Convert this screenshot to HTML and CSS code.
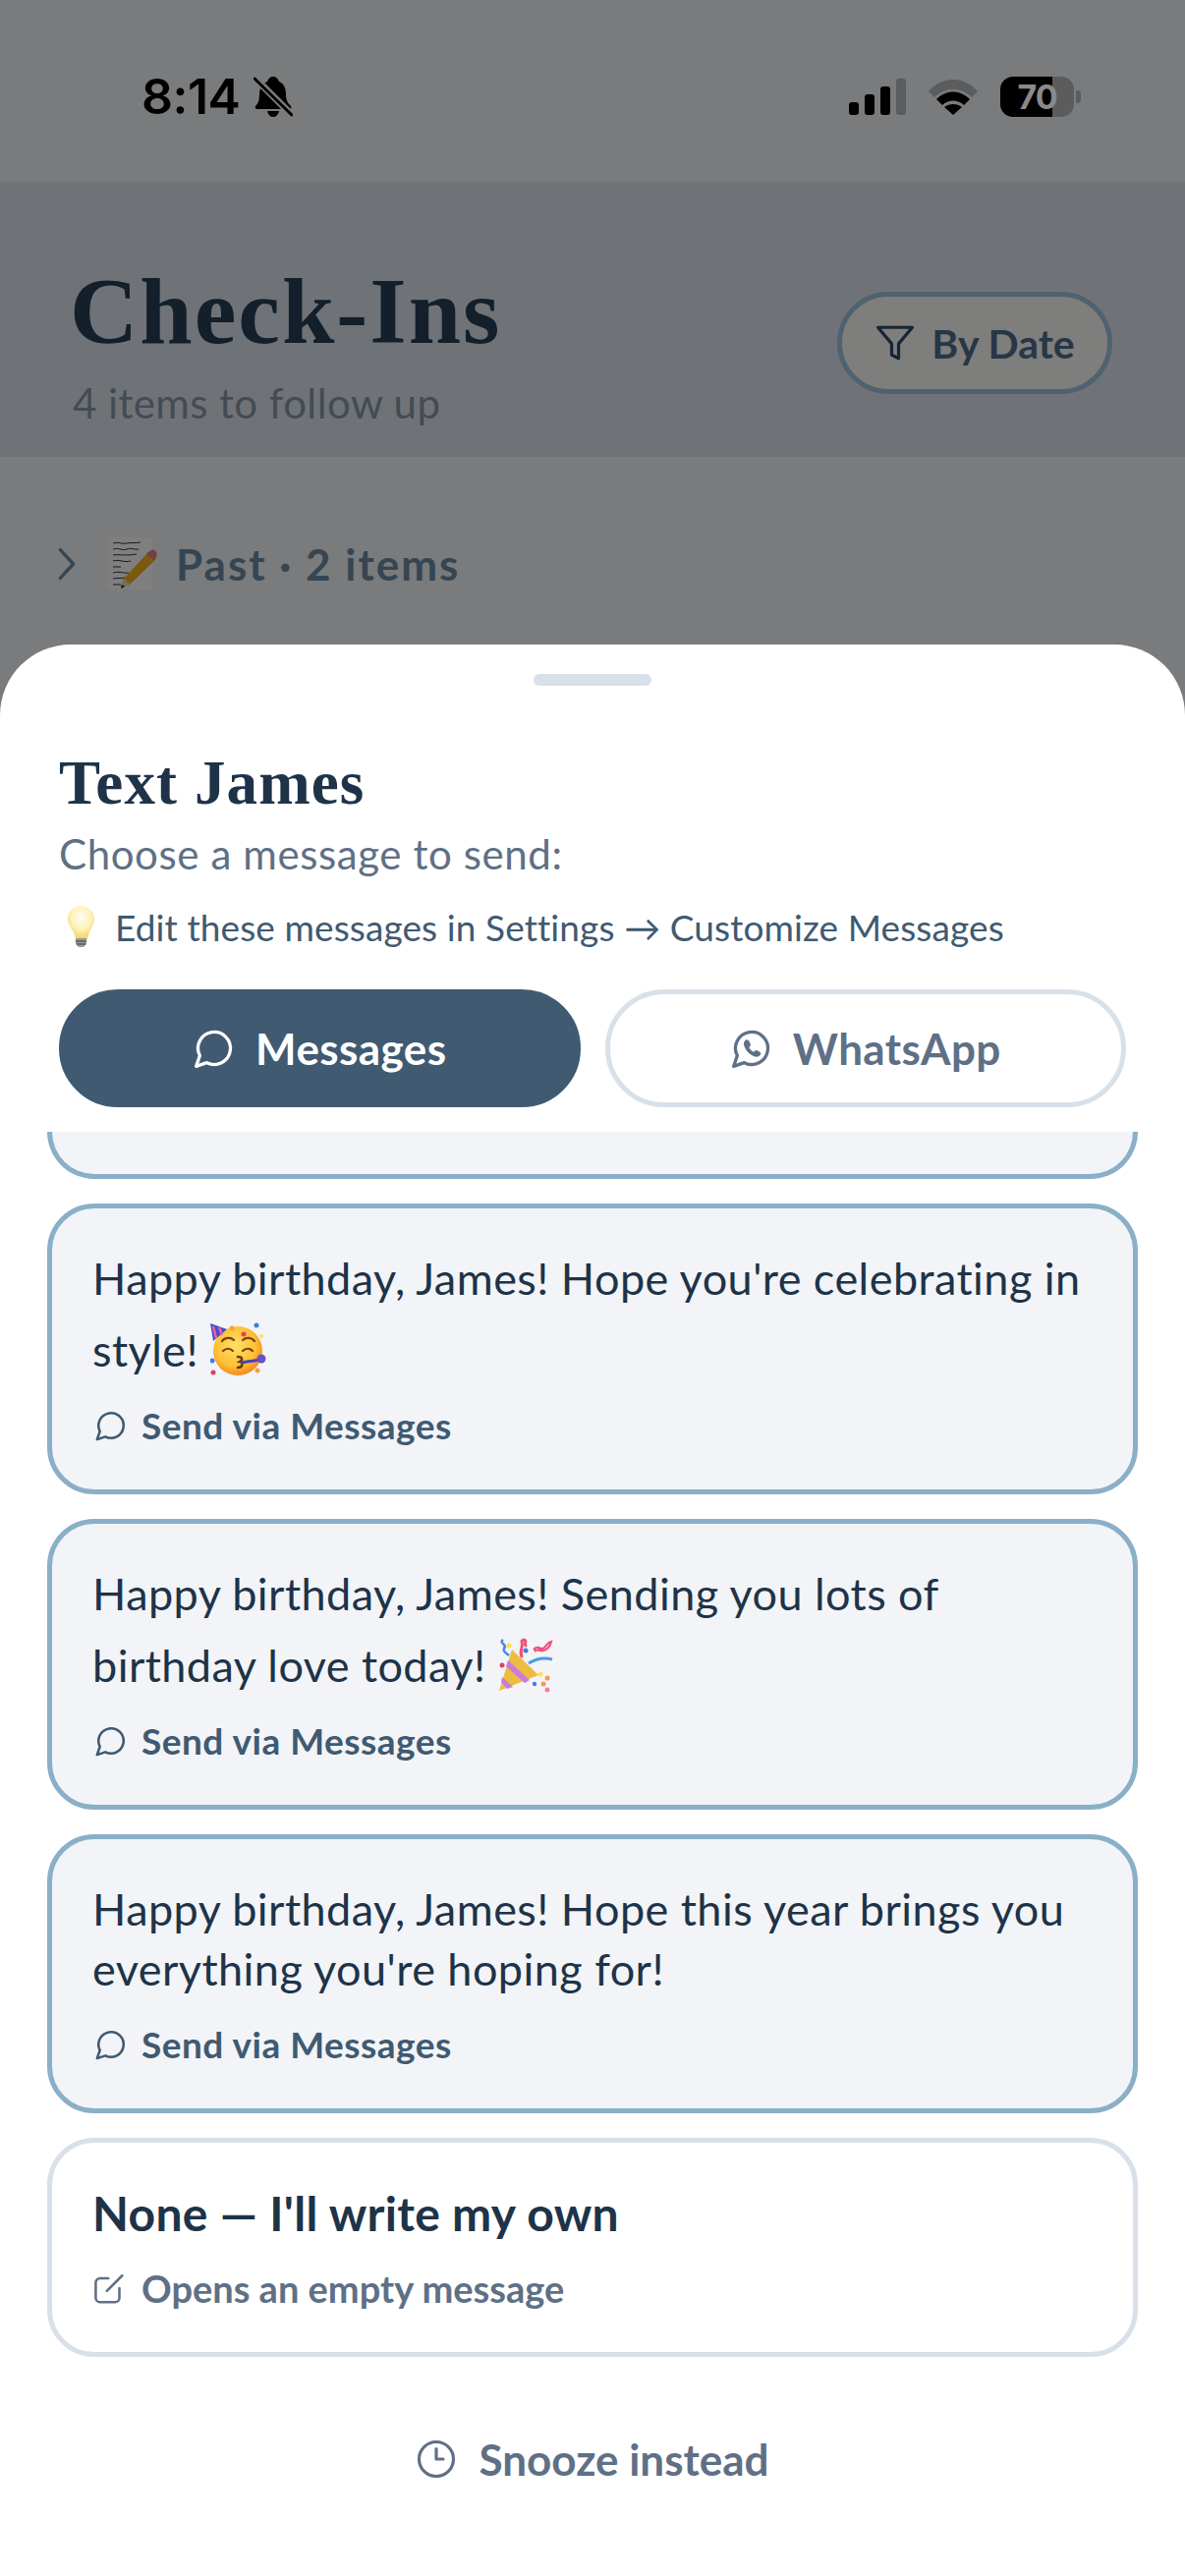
FILE: index.html
```html
<!DOCTYPE html>
<html>
<head>
  <title>Check-Ins</title>
  <link rel="stylesheet" href="styles.css">
</head>

<body>
  <div class="page">
    <div class="status-bar">
      <div class="status-left">
        <span class="clock">8:14</span>
        <svg class="bell" viewBox="0 0 40 42">
          <path d="M20 1c3 0 5 2 6 5 5 2 7 7 7 13 0 6 2 9 5 12 1 2 0 3-2 3H4c-2 0-3-1-2-3 3-3 4-6 4-12 0-6 3-11 8-13 1-3 3-5 6-5z" fill="#000"/>
          <path d="M14 36h12c-1 4-3 6-6 6s-5-2-6-6z" fill="#000"/>
          <path d="M2 3l36 36" stroke="#7a7b7c" stroke-width="7"/>
          <path d="M1 3l38 37" stroke="#000" stroke-width="3" stroke-linecap="round"/>
        </svg>
      </div>
      <div class="status-right">
        <div class="signal">
          <span class="bar bar-1"></span>
          <span class="bar bar-2"></span>
          <span class="bar bar-3"></span>
          <span class="bar bar-4"></span>
        </div>
        <svg class="wifi" viewBox="0 0 50 37">
          <path d="M0 13C14 -3 36 -3 50 13l-6 6C33 8 17 8 6 19z" fill="#5b5c5e"/>
          <path d="M8 21c10-10 24-10 34 0l-6 6c-6-6-16-6-22 0z" fill="#000"/>
          <path d="M16 29c5-4 13-4 18 0l-9 8z" fill="#000"/>
        </svg>
        <div class="battery">
          <span class="battery-level">70</span>
          <span class="battery-nub"></span>
        </div>
      </div>
    </div>

    <header class="header">
      <div>
        <h1>Check-Ins</h1>
        <p class="header-sub">4 items to follow up</p>
      </div>
      <button class="filter-button">
        <svg class="filter-icon" viewBox="0 0 24 24"><path d="M22 3H2l8 9.5V19l4 2v-8.500z"/></svg>
        By Date
      </button>
    </header>

    <div class="section-row">
      <svg class="chevron" viewBox="0 0 18 32"><path d="M3 3l12 13L3 29"/></svg>
      <svg class="memo" viewBox="0 0 45 53">
        <rect width="45" height="53" fill="#fff"/>
        <path d="M5 6c6-2 8 1 14 0s8 0 14-1M5 12c8-2 8 2 14 0s6 1 12 0M5 18c6-1 14 1 24-1M5 24c8-2 10 2 18 0M5 30h8M5 36c8-2 10 1 16 0M5 42c4-1 8 0 12-1M5 48h8" stroke="#333" stroke-width="1" fill="none"/>
        <path d="M41 15l8 7-27 26-9 4 3-10z" fill="#f4b41a"/>
        <path d="M41 15l3-2c2-1 4 0 5 2s1 4 0 5l-2 3-8-6z" fill="#ee7d86"/>
        <path d="M13 52l3-10 7 6z" fill="#f5dcb0"/>
        <path d="M13 52l1-4 3 2z" fill="#222"/>
      </svg>
      <span class="section-label">Past · 2 items</span>
    </div>
  </div>

  <div class="scrim"></div>

  <div class="sheet">
    <div class="handle"></div>
    <h2>Text James</h2>
    <p class="sheet-sub">Choose a message to send:</p>
    <p class="tip">
      <svg class="bulb" viewBox="0 0 29 43">
        <defs>
          <radialGradient id="glass" cx="50%" cy="35%" r="60%">
            <stop offset="0" stop-color="#fffdf0"/>
            <stop offset="0.6" stop-color="#fff2bd"/>
            <stop offset="1" stop-color="#f8d56a"/>
          </radialGradient>
        </defs>
        <path d="M14.500 0C22 0 28 6 28 13c0 8-6 12-7 21H9C8 25 1 21 1 13 1 6 7 0 14.500 0z" fill="url(#glass)"/>
        <path d="M9 33h11v6l-3 3h-5l-3-3z" fill="#9a9a94"/>
        <path d="M9 36h11M10 39h9" stroke="#5c5c58" stroke-width="1.500"/>
      </svg>
      Edit these messages in Settings → Customize Messages
    </p>

    <div class="tabs">
      <button class="tab tab-active">
        <svg class="tab-icon" viewBox="0 0 24 24"><path d="M7.900 20A9 9 0 1 0 4 16.100L2 22Z"/></svg>
        Messages
      </button>
      <button class="tab">
        <svg class="tab-icon" viewBox="0 0 24 24">
          <path d="M7.900 20A9 9 0 1 0 4 16.100L2 22Z"/>
          <path d="M8.800 7.500c-.9.600-1.200 1.800-.6 3.500.9 2.500 3 4.600 5.400 5.300 1.600.4 2.700 0 3.200-1 .2-.5.100-.8-.3-1l-1.700-.9c-.4-.2-.7-.1-1 .2l-.6.700c-1.200-.5-2.300-1.600-2.900-2.900l.6-.6c.3-.3.3-.6.2-1l-.8-1.800c-.2-.5-.9-.6-1.500-.5z" fill="currentColor" stroke-width="0.500"/>
        </svg>
        WhatsApp
      </button>
    </div>

    <div class="message-list">
      <div class="card card-peek"></div>

      <div class="card">
        <p class="card-text">Happy birthday, James! Hope you're celebrating in<br>style!
          <svg class="emoji" viewBox="0 0 57 57">
            <defs>
              <radialGradient id="face" cx="45%" cy="40%" r="60%">
                <stop offset="0" stop-color="#ffe066"/>
                <stop offset="0.7" stop-color="#fdbf34"/>
                <stop offset="1" stop-color="#f58a1f"/>
              </radialGradient>
            </defs>
            <circle cx="28" cy="30" r="25" fill="url(#face)"/>
            <path d="M0 2l17 6L3 20z" fill="#3f51c4"/>
            <path d="M3 5l3 12M9 6l3 8" stroke="#ee5fb0" stroke-width="2.500"/>
            <circle cx="22" cy="7" r="2.500" fill="#f5a142"/>
            <circle cx="34" cy="13" r="2.500" fill="#e0405f"/>
            <path d="M12 20c3-4 9-4 12-1M33 19c3-3 9-3 12 1M13 30c3-3 7-3 10 0M33 30c3-3 7-3 10 0" stroke="#7a4310" stroke-width="2.200" fill="none" stroke-linecap="round"/>
            <path d="M28 36c4 0 6 3 2 5 4 1 3 6-2 6" stroke="#6b3a10" stroke-width="2.500" fill="none" stroke-linecap="round"/>
            <path d="M31 42l20-3" stroke="#4b3fc0" stroke-width="3"/>
            <circle cx="52" cy="38" r="4.500" fill="#6a4fc8"/>
            <circle cx="47" cy="4" r="2.500" fill="#3d7fe0"/>
            <circle cx="52" cy="15" r="2" fill="#ffe14d"/>
            <circle cx="2" cy="40" r="2.500" fill="#3d7fe0"/>
            <circle cx="3" cy="52" r="2.500" fill="#e0405f"/>
            <circle cx="48" cy="50" r="2.500" fill="#f59a4c"/>
          </svg>
        </p>
        <div class="card-meta">
          <svg class="meta-icon" viewBox="0 0 24 24"><path d="M7.900 20A9 9 0 1 0 4 16.100L2 22Z"/></svg>
          Send via Messages
        </div>
      </div>

      <div class="card">
        <p class="card-text">Happy birthday, James! Sending you lots of<br>birthday love today!
          <svg class="emoji" viewBox="0 0 57 57">
            <path d="M15 13l27 26L2 55z" fill="#eebc3e"/>
            <path d="M11 24l22 20-5 3L9 30zM5 41l11 10-6 2-6-7z" fill="#c77be0"/>
            <path d="M25 20c-3-6 2-8 0-16M27 3c4 1 0 3 2 6" stroke="#f0507a" stroke-width="3" fill="none" stroke-linecap="round"/>
            <path d="M6 3c-5 4 5 4 1 9-2 3 3 5 5 7" stroke="#4a86e8" stroke-width="2.500" fill="none"/>
            <path d="M37 13c6-6 6 2 11-2 3-3 3-5 7-6-1 4-4 8-8 9-4 1-6-3-9 1" stroke="#f0507a" stroke-width="2.200" fill="none"/>
            <path d="M32 27c8-5 16-6 24-4" stroke="#4a9be8" stroke-width="3" fill="none"/>
            <circle cx="12" cy="9" r="2.500" fill="#ffe14d"/>
            <circle cx="29" cy="14" r="2.500" fill="#3d7fe0"/>
            <circle cx="5" cy="29" r="2.500" fill="#e0405f"/>
            <circle cx="44" cy="38" r="2.500" fill="#ffe14d"/>
            <circle cx="51" cy="42" r="2.500" fill="#f59a4c"/>
            <circle cx="47" cy="48" r="2.500" fill="#f59a4c"/>
            <circle cx="51" cy="54" r="2.500" fill="#f47ea0"/>
            <circle cx="38" cy="48" r="2.200" fill="#3d7fe0"/>
          </svg>
        </p>
        <div class="card-meta">
          <svg class="meta-icon" viewBox="0 0 24 24"><path d="M7.900 20A9 9 0 1 0 4 16.100L2 22Z"/></svg>
          Send via Messages
        </div>
      </div>

      <div class="card">
        <p class="card-text">Happy birthday, James! Hope this year brings you<br>everything you're hoping for!</p>
        <div class="card-meta">
          <svg class="meta-icon" viewBox="0 0 24 24"><path d="M7.900 20A9 9 0 1 0 4 16.100L2 22Z"/></svg>
          Send via Messages
        </div>
      </div>

      <div class="card card-own">
        <p class="card-title">None — I'll write my own</p>
        <div class="card-meta card-meta-muted">
          <svg class="meta-icon" viewBox="0 0 24 24">
            <path d="M10 5H4a3 3 0 0 0-3 3v11a3 3 0 0 0 3 3h11a3 3 0 0 0 3-3v-7"/>
            <path d="M9 14L20 3"/>
          </svg>
          Opens an empty message
        </div>
      </div>
    </div>

    <button class="snooze">
      <svg class="snooze-icon" viewBox="0 0 24 24">
        <circle cx="12" cy="12" r="10"/>
        <path d="M12 6v6h4"/>
      </svg>
      Snooze instead
    </button>
  </div>
</body>
</html>
```

FILE: styles.css
```css
* {
  box-sizing: border-box;
}

body {
  font-family: Lato, "Noto Sans", sans-serif;
  background-color: #f4f6f8;
  color: #14212e;
  margin: 0;
  padding: 0;
  width: 1206px;
  height: 2622px;
  overflow: hidden;
  position: relative;
}

h1,
h2,
p {
  margin: 0;
}

button {
  font-family: inherit;
}

/* Status bar */
.status-bar {
  height: 185px;
  padding: 77px 113px 0 144px;
  display: flex;
  justify-content: space-between;
  align-items: flex-start;
  position: relative;
  z-index: 2;
}

.status-left {
  display: flex;
  align-items: center;
  gap: 14px;
  height: 42px;
}

.clock {
  font-family: Inter, sans-serif;
  font-size: 50px;
  font-weight: 600;
  line-height: 42px;
  letter-spacing: -0.5px;
  color: #000;
}

.bell {
  width: 40px;
  height: 42px;
}

.status-right {
  display: flex;
  align-items: center;
  gap: 23px;
  height: 42px;
}

.signal {
  display: flex;
  align-items: flex-end;
  gap: 6px;
  height: 37px;
}

.bar {
  width: 10px;
  border-radius: 3px;
  background-color: #000;
}

.bar-1 { height: 13px; }
.bar-2 { height: 21px; }
.bar-3 { height: 29px; }
.bar-4 { height: 37px; background-color: #5b5c5e; }

.wifi {
  width: 50px;
  height: 37px;
}

.battery {
  position: relative;
  width: 75px;
  height: 41px;
  border-radius: 13px;
  background: linear-gradient(to right, #000 53px, #5b5c5e 53px);
  color: #8a8a8a;
  font-family: Inter, sans-serif;
  font-size: 34px;
  font-weight: 700;
  line-height: 41px;
  text-align: center;
  letter-spacing: -1px;
}

.battery-nub {
  position: absolute;
  right: -7px;
  top: 14px;
  width: 5px;
  height: 13px;
  border-radius: 0 4px 4px 0;
  background-color: #5b5c5e;
}

/* Page header, sits under the scrim */
.header {
  height: 280px;
  padding: 0 74px;
  background-color: #dee6f0;
  display: flex;
  justify-content: space-between;
  align-items: flex-start;
}

h1 {
  font-family: "Liberation Serif", serif;
  font-size: 96px;
  font-weight: 700;
  letter-spacing: 2px;
  line-height: 100px;
  margin: 82px 0 0 -3px;
  color: #263f56;
}

.header-sub {
  font-size: 42px;
  letter-spacing: 0.4px;
  line-height: 54px;
  margin-top: 16px;
  color: #8896a6;
}

.filter-button {
  width: 280px;
  height: 104px;
  margin-top: 112px;
  border: 5px solid #9cc4de;
  border-radius: 52px;
  background-color: #fcfcf8;
  color: #4f6f8c;
  font-size: 41px;
  font-weight: 700;
  display: flex;
  align-items: center;
  justify-content: center;
  gap: 16px;
}

.filter-icon {
  width: 42px;
  height: 42px;
  fill: none;
  stroke: #2a4a66;
  stroke-width: 1.8;
  stroke-linejoin: round;
}

.section-row {
  display: flex;
  align-items: center;
  padding: 82px 0 0 58px;
}

.chevron {
  width: 20px;
  height: 36px;
  fill: none;
  stroke: #6c8aa4;
  stroke-width: 3;
  stroke-linecap: round;
  stroke-linejoin: round;
}

.memo {
  width: 45px;
  height: 53px;
  margin-left: 32px;
  overflow: visible;
}

.section-label {
  margin-left: 24px;
  font-size: 44px;
  font-weight: 700;
  letter-spacing: 2px;
  color: #6c8aa4;
}

.scrim {
  position: absolute;
  inset: 0;
  background-color: rgba(0, 0, 0, 0.5);
  z-index: 1;
}

/* Bottom sheet */
.sheet {
  position: absolute;
  left: 0;
  right: 0;
  top: 656px;
  bottom: 0;
  z-index: 3;
  padding: 30px 60px 0;
  background-color: #fff;
  border-radius: 72px 72px 0 0;
}

.handle {
  width: 120px;
  height: 12px;
  margin: 0 auto;
  border-radius: 6px;
  background-color: #d8e1e9;
}

h2 {
  font-family: "Liberation Serif", serif;
  font-size: 63px;
  font-weight: 700;
  letter-spacing: 1.1px;
  line-height: 70px;
  margin-top: 64px;
  color: #1e3348;
}

.sheet-sub {
  font-size: 42px;
  letter-spacing: 0.6px;
  line-height: 54px;
  margin-top: 10px;
  color: #5f7086;
}

.tip {
  display: flex;
  align-items: center;
  height: 46px;
  margin-top: 24px;
  font-size: 37px;
  letter-spacing: 0.1px;
  color: #3f5a72;
}

.bulb {
  width: 29px;
  height: 43px;
  margin: 0 20px 0 8px;
}

.tabs {
  display: grid;
  grid-template-columns: 1fr 1fr;
  gap: 25px;
  margin-top: 41px;
}

.tab {
  height: 120px;
  border: 5px solid #d8e1e9;
  border-radius: 60px;
  background-color: #fff;
  color: #5f7086;
  font-size: 44px;
  font-weight: 700;
  letter-spacing: 0.4px;
  display: flex;
  align-items: center;
  justify-content: center;
  gap: 20px;
}

.tab-active {
  border-color: #405a72;
  background-color: #405a72;
  color: #fff;
}

.tab-icon {
  width: 44px;
  height: 44px;
  fill: none;
  stroke: currentColor;
  stroke-width: 1.8;
  stroke-linejoin: round;
}

.message-list {
  display: flex;
  flex-direction: column;
  gap: 25px;
  margin: 25px -12px 0;
}

.card {
  border: 5px solid #8aafc8;
  border-radius: 48px;
  padding: 41px 41px 38px;
  background-color: #f2f4f7;
}

.card-peek {
  height: 48px;
  padding: 0;
  border-top: 0;
  border-radius: 0 0 48px 48px;
}

.card-own {
  border-color: #d8e1e9;
  background-color: #fff;
}

.card-text {
  font-size: 45px;
  letter-spacing: 0.45px;
  line-height: 61px;
  color: #1e3348;
}

.card-title {
  font-size: 48px;
  font-weight: 700;
  letter-spacing: 0.3px;
  line-height: 61px;
  color: #1e3348;
}

.emoji {
  width: 57px;
  height: 57px;
  margin-top: 13px;
  vertical-align: -11px;
}

.card-meta {
  display: flex;
  align-items: center;
  gap: 14px;
  height: 55px;
  margin-top: 18px;
  padding-left: 2px;
  font-size: 37px;
  font-weight: 700;
  letter-spacing: 0.5px;
  color: #3f5a72;
}

.card-meta-muted {
  font-size: 38px;
  letter-spacing: 0;
  color: #5f7086;
}

.meta-icon {
  width: 34px;
  height: 34px;
  fill: none;
  stroke: currentColor;
  stroke-width: 1.8;
  stroke-linecap: round;
  stroke-linejoin: round;
}

.snooze {
  display: flex;
  align-items: center;
  justify-content: center;
  gap: 22px;
  width: 100%;
  height: 60px;
  margin-top: 74px;
  border: 0;
  background: none;
  color: #5f7086;
  font-size: 44px;
  font-weight: 700;
}

.snooze-icon {
  width: 42px;
  height: 42px;
  fill: none;
  stroke: currentColor;
  stroke-width: 1.8;
  stroke-linecap: round;
  stroke-linejoin: round;
}
```
